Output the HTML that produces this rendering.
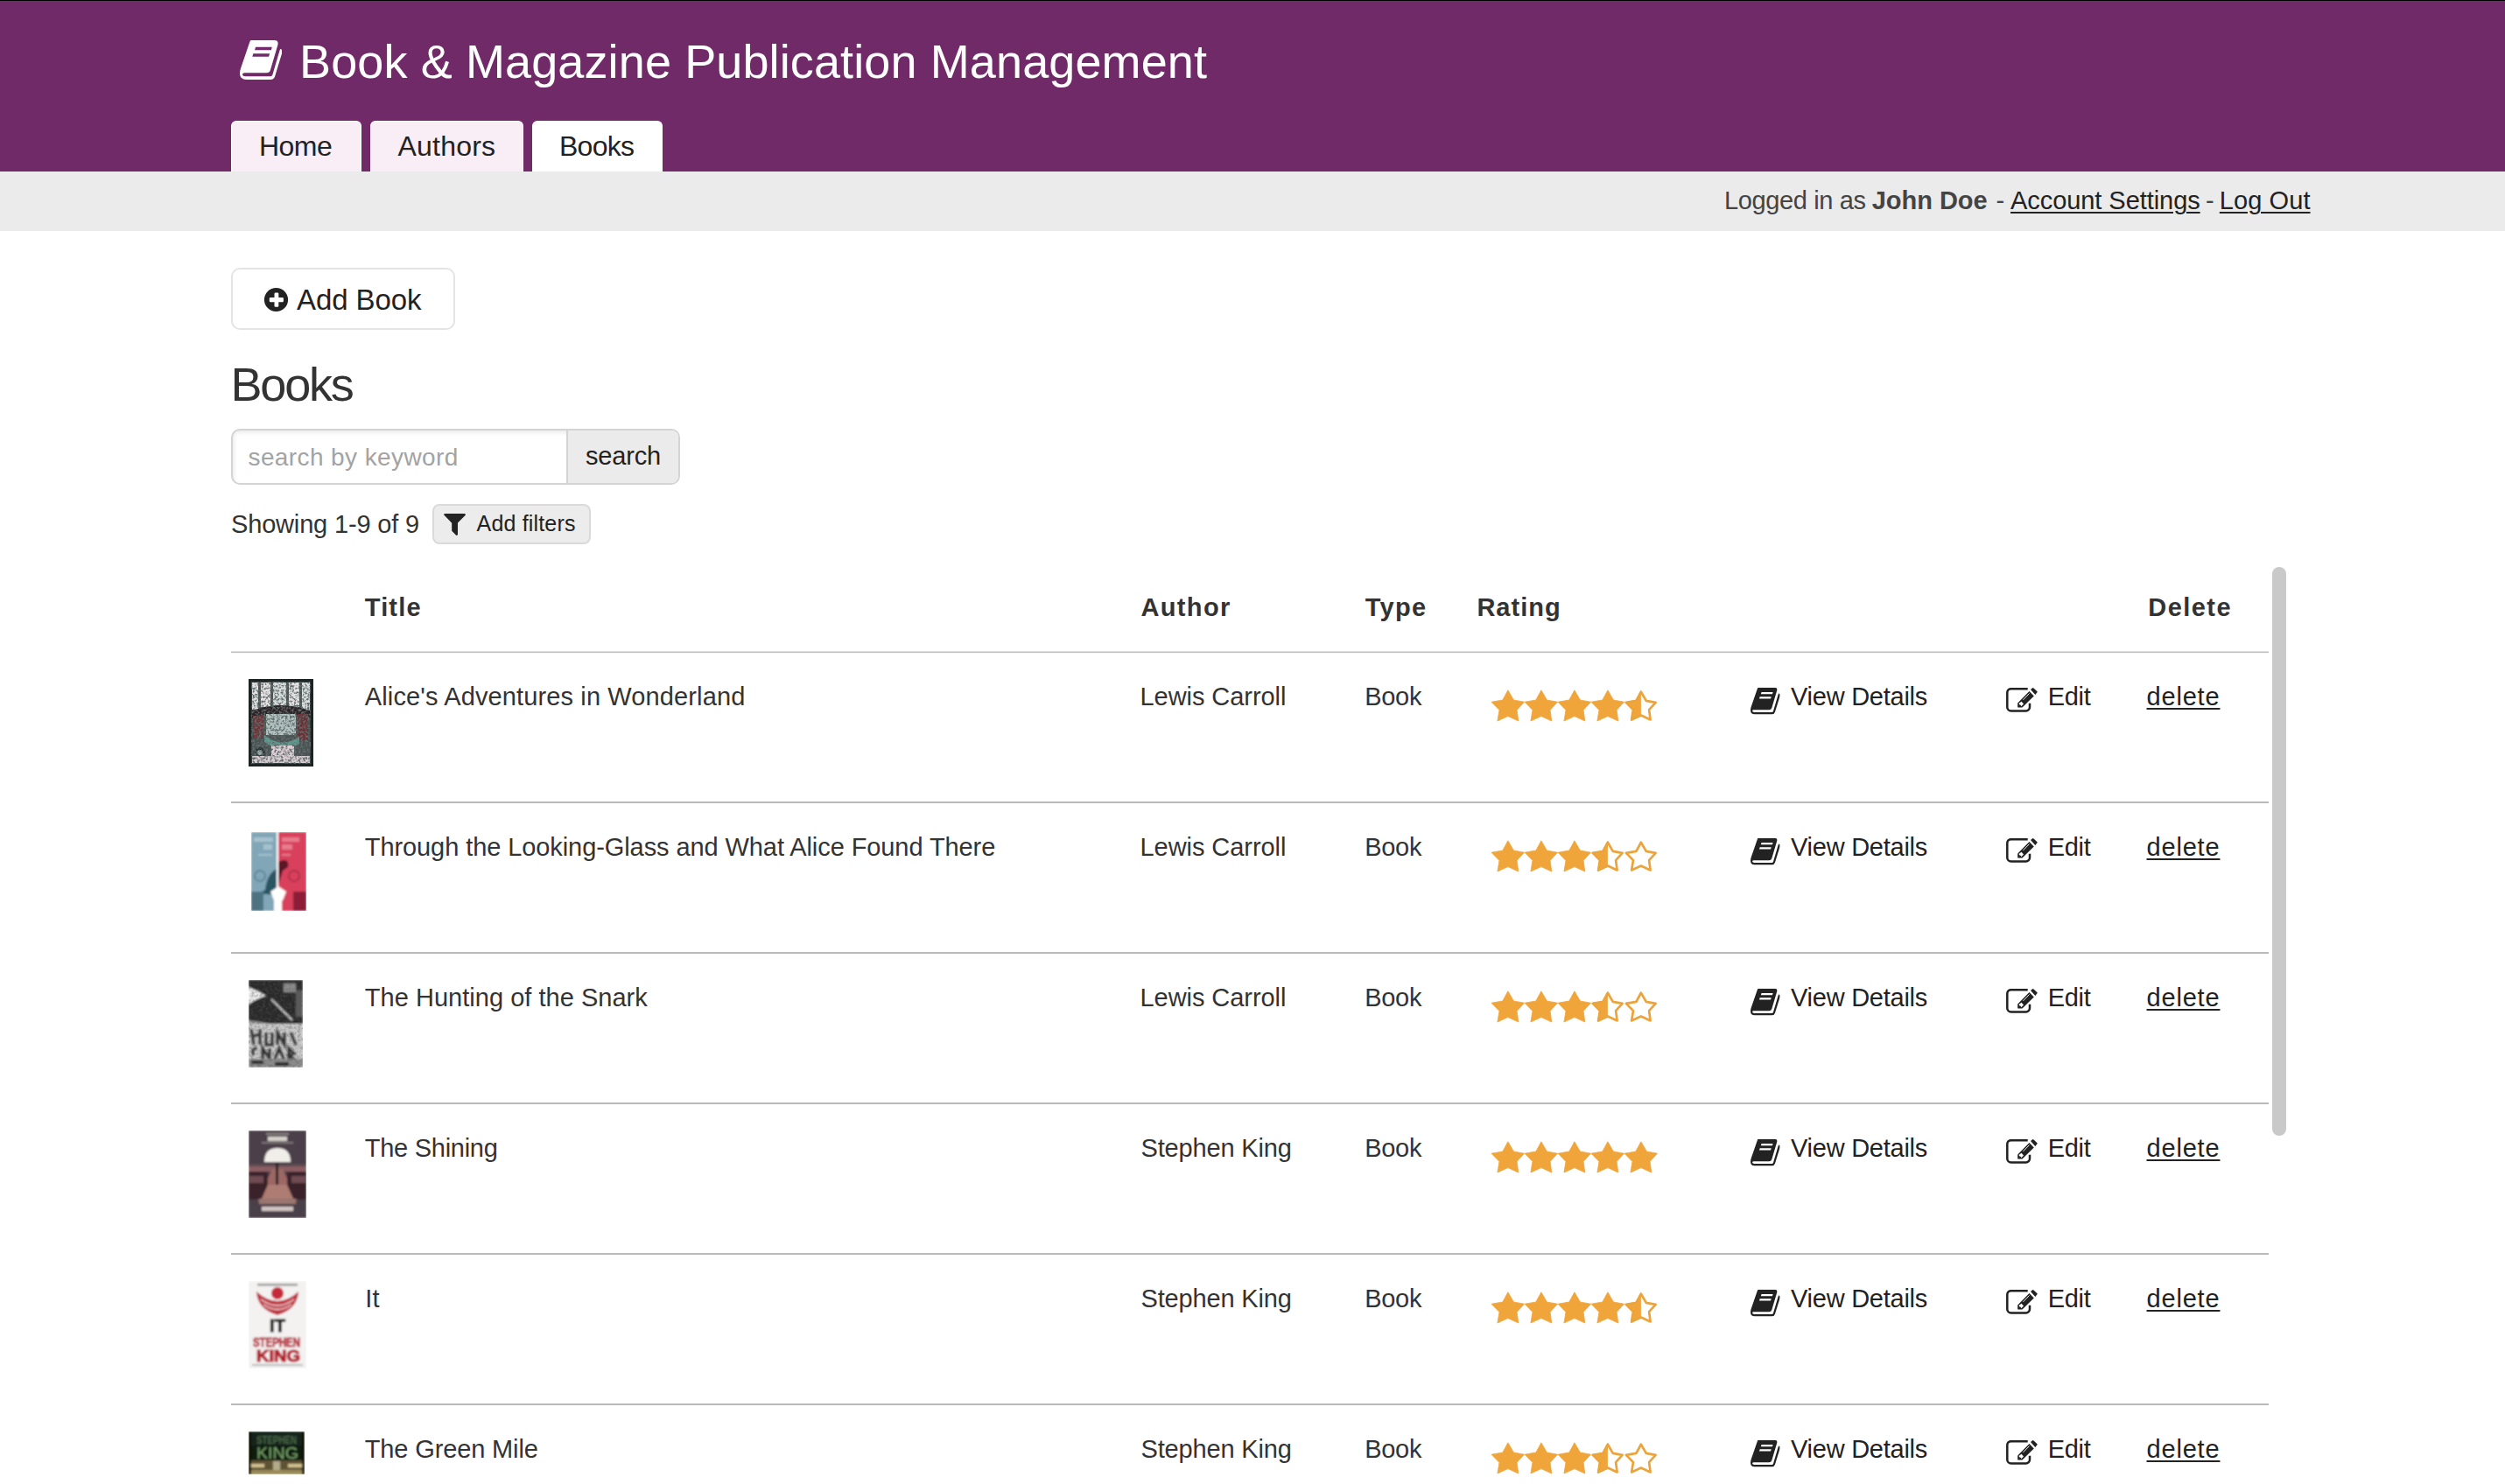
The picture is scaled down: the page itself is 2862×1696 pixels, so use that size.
<!DOCTYPE html>
<html><head><meta charset="utf-8"><title>Books</title>
<style>
html,body{margin:0;padding:0;background:#fff;}
body{width:2862px;height:1696px;overflow:hidden;position:relative;font-family:"Liberation Sans",sans-serif;}
.abs{position:absolute;}
.t{position:absolute;white-space:pre;font-family:"Liberation Sans",sans-serif;}
#hdr{position:absolute;left:0;top:0;width:2862px;height:196px;background:#702a68;border-top:1px solid #000;box-sizing:border-box;}
.tab{position:absolute;top:138px;height:58px;border-radius:6px 6px 0 0;box-sizing:border-box;border:1px solid #fff;border-bottom:none;background:#f9eef6;}
#bar{position:absolute;left:0;top:196px;width:2862px;height:68px;background:#ebebeb;}
#addbtn{position:absolute;left:264px;top:306px;width:256px;height:71px;box-sizing:border-box;border:2px solid #e4e4e4;border-radius:10px;background:#fff;}
#search{position:absolute;left:264px;top:490px;width:513px;height:64px;box-sizing:border-box;border:2px solid #d4d4d4;border-radius:10px;overflow:hidden;background:#fff;}
#search .inp{position:absolute;left:0;top:0;width:381px;height:60px;box-shadow:inset 2px 3px 4px rgba(0,0,0,0.075);}
#search .btn{position:absolute;left:381px;top:0;width:130px;height:60px;background:#ebebeb;border-left:2px solid #d4d4d4;box-sizing:border-box;}
#filt{position:absolute;left:494px;top:576px;width:181px;height:46px;box-sizing:border-box;border:2px solid #dadada;border-radius:8px;background:#ececec;}
#scroll{position:absolute;left:2596px;top:648px;width:16px;height:650px;border-radius:8px;background:#c9c9c9;}
</style></head><body>
<svg width="0" height="0" style="position:absolute">
<defs><symbol id="book" viewBox="0 0 34 31" preserveAspectRatio="none">
<path d="M9 0 H27.6 Q31.3 0 30.6 3.4 L24.6 23.4 Q23.9 25.6 21.5 25.6 H3.8 Q2 25.6 2.1 27 Q2.3 28.4 4.3 28.4 H24.6 Q25.9 28.4 26.3 27.2 L32 8.2 Q32.4 6.7 33 6.9 Q34.6 7.6 34 9.9 L28.3 28.3 Q27.5 31 24.6 31 H5.4 Q0 31 0 26.2 Q0 24.3 0.7 22.3 L7.9 1.5 Q8.4 0 9 0 Z M12.7 5.3 H25.9 L25.2 7.7 H12 Z M10.8 10.5 H24 L23.3 13 H10.1 Z" fill-rule="evenodd"/>
</symbol><symbol id="edit" viewBox="0 0 36 28">
<path d="M24.7 1.2 H5.6 A4.3 4.3 0 0 0 1.3 5.5 V22.2 A4.3 4.3 0 0 0 5.6 26.5 H22.7 A4.3 4.3 0 0 0 27 22.2 V17.8" fill="none" stroke="#222" stroke-width="2.5"/>
<path d="M13.2 17.5 L26.5 3.9 L31.8 9.5 L18.5 22.5 L13.2 22.5 Z" fill="#222"/>
<path d="M19.4 13.9 L26.5 6.5" stroke="#fff" stroke-width="0.9"/>
<path d="M14.65 17.8 L17.6 15.7 L20 18.4 L17.3 21.2 L16.7 19.7 L15.5 19.6 L14.8 18.8 Z" fill="#fff"/>
<path d="M28 2.1 L30.2 0.2 Q30.7 -0.1 31.2 0.3 L35.5 4.2 Q35.9 4.7 35.5 5.2 L33.3 8 Z" fill="#222"/>
</symbol></defs></svg>
<div id="hdr"></div>
<svg style="position:absolute;left:274px;top:45.8px" width="48.3" height="45" viewBox="0 0 48.3 45"><use href="#book" fill="#fff" x="0" y="0" width="48.3" height="45"/></svg>
<div class="tab" style="left:264px;width:149px;"></div>
<div class="tab" style="left:423px;width:175px;"></div>
<div class="tab" style="left:608px;width:149px;background:#fff;"></div>
<div id="bar"></div>
<div id="addbtn"></div>
<svg class="abs" style="left:300px;top:327px" width="32" height="32" viewBox="0 0 32 32">
<circle cx="15.5" cy="15.5" r="13.6" fill="#222"/>
<rect x="7.8" y="13" width="16.1" height="5.3" rx="1.2" fill="#fff"/>
<rect x="13.5" y="7.5" width="4.8" height="16.3" rx="1.2" fill="#fff"/>
</svg>
<div id="search"><div class="inp"></div><div class="btn"></div></div>
<div id="filt"></div>
<svg class="abs" style="left:0;top:0" width="2862" height="1696" viewBox="0 0 2862 1696">
<path d="M507 588.2 Q507.3 587.1 508.8 587.1 H530.3 Q531.8 587.1 532 588.4 L523 597.4 V610.8 Q522.6 612.2 521.4 611.9 L516.2 606.7 V597.8 Z" fill="#222"/>
<rect x="264" y="744.5" width="2328" height="1.6" fill="#bdbdbd"/>
<rect x="264" y="916.0" width="2328" height="2" fill="#bababa"/>
<rect x="264" y="1088.0" width="2328" height="2" fill="#bababa"/>
<rect x="264" y="1260.0" width="2328" height="2" fill="#bababa"/>
<rect x="264" y="1432.0" width="2328" height="2" fill="#bababa"/>
<rect x="264" y="1604.0" width="2328" height="2" fill="#bababa"/>
<polygon points="1722.90,788.80 1729.40,800.00 1741.50,802.20 1733.10,811.50 1734.80,824.00 1722.90,818.60 1710.90,824.00 1713.00,811.50 1704.00,802.20 1716.80,800.00" fill="#f0a53b" stroke="#f0a53b" stroke-width="0.8" stroke-linejoin="round"/>
<polygon points="1760.90,788.80 1767.40,800.00 1779.50,802.20 1771.10,811.50 1772.80,824.00 1760.90,818.60 1748.90,824.00 1751.00,811.50 1742.00,802.20 1754.80,800.00" fill="#f0a53b" stroke="#f0a53b" stroke-width="0.8" stroke-linejoin="round"/>
<polygon points="1798.90,788.80 1805.40,800.00 1817.50,802.20 1809.10,811.50 1810.80,824.00 1798.90,818.60 1786.90,824.00 1789.00,811.50 1780.00,802.20 1792.80,800.00" fill="#f0a53b" stroke="#f0a53b" stroke-width="0.8" stroke-linejoin="round"/>
<polygon points="1836.90,788.80 1843.40,800.00 1855.50,802.20 1847.10,811.50 1848.80,824.00 1836.90,818.60 1824.90,824.00 1827.00,811.50 1818.00,802.20 1830.80,800.00" fill="#f0a53b" stroke="#f0a53b" stroke-width="0.8" stroke-linejoin="round"/>
<clipPath id="c04"><rect x="1856.0" y="786.8" width="18.9" height="40"/></clipPath>
<polygon points="1874.90,788.80 1881.40,800.00 1893.50,802.20 1885.10,811.50 1886.80,824.00 1874.90,818.60 1862.90,824.00 1865.00,811.50 1856.00,802.20 1868.80,800.00" fill="#f0a53b" clip-path="url(#c04)"/>
<polygon points="18.90,0.00 25.40,11.20 37.50,13.40 29.10,22.70 30.80,35.20 18.90,29.80 6.90,35.20 9.00,22.70 0.00,13.40 12.80,11.20" fill="none" stroke="#eba43c" stroke-width="3" stroke-linejoin="round" transform="translate(1874.90 808.30) scale(0.9) translate(-18.90 -19.50)"/>
<polygon points="1722.90,960.80 1729.40,972.00 1741.50,974.20 1733.10,983.50 1734.80,996.00 1722.90,990.60 1710.90,996.00 1713.00,983.50 1704.00,974.20 1716.80,972.00" fill="#f0a53b" stroke="#f0a53b" stroke-width="0.8" stroke-linejoin="round"/>
<polygon points="1760.90,960.80 1767.40,972.00 1779.50,974.20 1771.10,983.50 1772.80,996.00 1760.90,990.60 1748.90,996.00 1751.00,983.50 1742.00,974.20 1754.80,972.00" fill="#f0a53b" stroke="#f0a53b" stroke-width="0.8" stroke-linejoin="round"/>
<polygon points="1798.90,960.80 1805.40,972.00 1817.50,974.20 1809.10,983.50 1810.80,996.00 1798.90,990.60 1786.90,996.00 1789.00,983.50 1780.00,974.20 1792.80,972.00" fill="#f0a53b" stroke="#f0a53b" stroke-width="0.8" stroke-linejoin="round"/>
<clipPath id="c13"><rect x="1818.0" y="958.8" width="18.9" height="40"/></clipPath>
<polygon points="1836.90,960.80 1843.40,972.00 1855.50,974.20 1847.10,983.50 1848.80,996.00 1836.90,990.60 1824.90,996.00 1827.00,983.50 1818.00,974.20 1830.80,972.00" fill="#f0a53b" clip-path="url(#c13)"/>
<polygon points="18.90,0.00 25.40,11.20 37.50,13.40 29.10,22.70 30.80,35.20 18.90,29.80 6.90,35.20 9.00,22.70 0.00,13.40 12.80,11.20" fill="none" stroke="#eba43c" stroke-width="3" stroke-linejoin="round" transform="translate(1836.90 980.30) scale(0.9) translate(-18.90 -19.50)"/>
<polygon points="18.90,0.00 25.40,11.20 37.50,13.40 29.10,22.70 30.80,35.20 18.90,29.80 6.90,35.20 9.00,22.70 0.00,13.40 12.80,11.20" fill="none" stroke="#eba43c" stroke-width="3" stroke-linejoin="round" transform="translate(1874.90 980.30) scale(0.9) translate(-18.90 -19.50)"/>
<polygon points="1722.90,1132.80 1729.40,1144.00 1741.50,1146.20 1733.10,1155.50 1734.80,1168.00 1722.90,1162.60 1710.90,1168.00 1713.00,1155.50 1704.00,1146.20 1716.80,1144.00" fill="#f0a53b" stroke="#f0a53b" stroke-width="0.8" stroke-linejoin="round"/>
<polygon points="1760.90,1132.80 1767.40,1144.00 1779.50,1146.20 1771.10,1155.50 1772.80,1168.00 1760.90,1162.60 1748.90,1168.00 1751.00,1155.50 1742.00,1146.20 1754.80,1144.00" fill="#f0a53b" stroke="#f0a53b" stroke-width="0.8" stroke-linejoin="round"/>
<polygon points="1798.90,1132.80 1805.40,1144.00 1817.50,1146.20 1809.10,1155.50 1810.80,1168.00 1798.90,1162.60 1786.90,1168.00 1789.00,1155.50 1780.00,1146.20 1792.80,1144.00" fill="#f0a53b" stroke="#f0a53b" stroke-width="0.8" stroke-linejoin="round"/>
<clipPath id="c23"><rect x="1818.0" y="1130.8" width="18.9" height="40"/></clipPath>
<polygon points="1836.90,1132.80 1843.40,1144.00 1855.50,1146.20 1847.10,1155.50 1848.80,1168.00 1836.90,1162.60 1824.90,1168.00 1827.00,1155.50 1818.00,1146.20 1830.80,1144.00" fill="#f0a53b" clip-path="url(#c23)"/>
<polygon points="18.90,0.00 25.40,11.20 37.50,13.40 29.10,22.70 30.80,35.20 18.90,29.80 6.90,35.20 9.00,22.70 0.00,13.40 12.80,11.20" fill="none" stroke="#eba43c" stroke-width="3" stroke-linejoin="round" transform="translate(1836.90 1152.30) scale(0.9) translate(-18.90 -19.50)"/>
<polygon points="18.90,0.00 25.40,11.20 37.50,13.40 29.10,22.70 30.80,35.20 18.90,29.80 6.90,35.20 9.00,22.70 0.00,13.40 12.80,11.20" fill="none" stroke="#eba43c" stroke-width="3" stroke-linejoin="round" transform="translate(1874.90 1152.30) scale(0.9) translate(-18.90 -19.50)"/>
<polygon points="1722.90,1304.80 1729.40,1316.00 1741.50,1318.20 1733.10,1327.50 1734.80,1340.00 1722.90,1334.60 1710.90,1340.00 1713.00,1327.50 1704.00,1318.20 1716.80,1316.00" fill="#f0a53b" stroke="#f0a53b" stroke-width="0.8" stroke-linejoin="round"/>
<polygon points="1760.90,1304.80 1767.40,1316.00 1779.50,1318.20 1771.10,1327.50 1772.80,1340.00 1760.90,1334.60 1748.90,1340.00 1751.00,1327.50 1742.00,1318.20 1754.80,1316.00" fill="#f0a53b" stroke="#f0a53b" stroke-width="0.8" stroke-linejoin="round"/>
<polygon points="1798.90,1304.80 1805.40,1316.00 1817.50,1318.20 1809.10,1327.50 1810.80,1340.00 1798.90,1334.60 1786.90,1340.00 1789.00,1327.50 1780.00,1318.20 1792.80,1316.00" fill="#f0a53b" stroke="#f0a53b" stroke-width="0.8" stroke-linejoin="round"/>
<polygon points="1836.90,1304.80 1843.40,1316.00 1855.50,1318.20 1847.10,1327.50 1848.80,1340.00 1836.90,1334.60 1824.90,1340.00 1827.00,1327.50 1818.00,1318.20 1830.80,1316.00" fill="#f0a53b" stroke="#f0a53b" stroke-width="0.8" stroke-linejoin="round"/>
<polygon points="1874.90,1304.80 1881.40,1316.00 1893.50,1318.20 1885.10,1327.50 1886.80,1340.00 1874.90,1334.60 1862.90,1340.00 1865.00,1327.50 1856.00,1318.20 1868.80,1316.00" fill="#f0a53b" stroke="#f0a53b" stroke-width="0.8" stroke-linejoin="round"/>
<polygon points="1722.90,1476.80 1729.40,1488.00 1741.50,1490.20 1733.10,1499.50 1734.80,1512.00 1722.90,1506.60 1710.90,1512.00 1713.00,1499.50 1704.00,1490.20 1716.80,1488.00" fill="#f0a53b" stroke="#f0a53b" stroke-width="0.8" stroke-linejoin="round"/>
<polygon points="1760.90,1476.80 1767.40,1488.00 1779.50,1490.20 1771.10,1499.50 1772.80,1512.00 1760.90,1506.60 1748.90,1512.00 1751.00,1499.50 1742.00,1490.20 1754.80,1488.00" fill="#f0a53b" stroke="#f0a53b" stroke-width="0.8" stroke-linejoin="round"/>
<polygon points="1798.90,1476.80 1805.40,1488.00 1817.50,1490.20 1809.10,1499.50 1810.80,1512.00 1798.90,1506.60 1786.90,1512.00 1789.00,1499.50 1780.00,1490.20 1792.80,1488.00" fill="#f0a53b" stroke="#f0a53b" stroke-width="0.8" stroke-linejoin="round"/>
<polygon points="1836.90,1476.80 1843.40,1488.00 1855.50,1490.20 1847.10,1499.50 1848.80,1512.00 1836.90,1506.60 1824.90,1512.00 1827.00,1499.50 1818.00,1490.20 1830.80,1488.00" fill="#f0a53b" stroke="#f0a53b" stroke-width="0.8" stroke-linejoin="round"/>
<clipPath id="c44"><rect x="1856.0" y="1474.8" width="18.9" height="40"/></clipPath>
<polygon points="1874.90,1476.80 1881.40,1488.00 1893.50,1490.20 1885.10,1499.50 1886.80,1512.00 1874.90,1506.60 1862.90,1512.00 1865.00,1499.50 1856.00,1490.20 1868.80,1488.00" fill="#f0a53b" clip-path="url(#c44)"/>
<polygon points="18.90,0.00 25.40,11.20 37.50,13.40 29.10,22.70 30.80,35.20 18.90,29.80 6.90,35.20 9.00,22.70 0.00,13.40 12.80,11.20" fill="none" stroke="#eba43c" stroke-width="3" stroke-linejoin="round" transform="translate(1874.90 1496.30) scale(0.9) translate(-18.90 -19.50)"/>
<polygon points="1722.90,1648.80 1729.40,1660.00 1741.50,1662.20 1733.10,1671.50 1734.80,1684.00 1722.90,1678.60 1710.90,1684.00 1713.00,1671.50 1704.00,1662.20 1716.80,1660.00" fill="#f0a53b" stroke="#f0a53b" stroke-width="0.8" stroke-linejoin="round"/>
<polygon points="1760.90,1648.80 1767.40,1660.00 1779.50,1662.20 1771.10,1671.50 1772.80,1684.00 1760.90,1678.60 1748.90,1684.00 1751.00,1671.50 1742.00,1662.20 1754.80,1660.00" fill="#f0a53b" stroke="#f0a53b" stroke-width="0.8" stroke-linejoin="round"/>
<polygon points="1798.90,1648.80 1805.40,1660.00 1817.50,1662.20 1809.10,1671.50 1810.80,1684.00 1798.90,1678.60 1786.90,1684.00 1789.00,1671.50 1780.00,1662.20 1792.80,1660.00" fill="#f0a53b" stroke="#f0a53b" stroke-width="0.8" stroke-linejoin="round"/>
<clipPath id="c53"><rect x="1818.0" y="1646.8" width="18.9" height="40"/></clipPath>
<polygon points="1836.90,1648.80 1843.40,1660.00 1855.50,1662.20 1847.10,1671.50 1848.80,1684.00 1836.90,1678.60 1824.90,1684.00 1827.00,1671.50 1818.00,1662.20 1830.80,1660.00" fill="#f0a53b" clip-path="url(#c53)"/>
<polygon points="18.90,0.00 25.40,11.20 37.50,13.40 29.10,22.70 30.80,35.20 18.90,29.80 6.90,35.20 9.00,22.70 0.00,13.40 12.80,11.20" fill="none" stroke="#eba43c" stroke-width="3" stroke-linejoin="round" transform="translate(1836.90 1668.30) scale(0.9) translate(-18.90 -19.50)"/>
<polygon points="18.90,0.00 25.40,11.20 37.50,13.40 29.10,22.70 30.80,35.20 18.90,29.80 6.90,35.20 9.00,22.70 0.00,13.40 12.80,11.20" fill="none" stroke="#eba43c" stroke-width="3" stroke-linejoin="round" transform="translate(1874.90 1668.30) scale(0.9) translate(-18.90 -19.50)"/>
<use href="#book" x="2000" y="785.7" width="33.6" height="30.8" fill="#222"/>
<use href="#edit" x="2292" y="786" width="36" height="28" />
<use href="#book" x="2000" y="957.7" width="33.6" height="30.8" fill="#222"/>
<use href="#edit" x="2292" y="958" width="36" height="28" />
<use href="#book" x="2000" y="1129.7" width="33.6" height="30.8" fill="#222"/>
<use href="#edit" x="2292" y="1130" width="36" height="28" />
<use href="#book" x="2000" y="1301.7" width="33.6" height="30.8" fill="#222"/>
<use href="#edit" x="2292" y="1302" width="36" height="28" />
<use href="#book" x="2000" y="1473.7" width="33.6" height="30.8" fill="#222"/>
<use href="#edit" x="2292" y="1474" width="36" height="28" />
<use href="#book" x="2000" y="1645.7" width="33.6" height="30.8" fill="#222"/>
<use href="#edit" x="2292" y="1646" width="36" height="28" />
</svg>

<svg width="0" height="0" style="position:absolute"><defs>
<filter id="nz1" x="0" y="0" width="100%" height="100%"><feTurbulence type="fractalNoise" baseFrequency="0.4" numOctaves="2" seed="7"/><feColorMatrix type="matrix" values="0 0 0 0 0.12  0 0 0 0 0.15  0 0 0 0 0.15  0 0 0 -3.6 2.05"/><feGaussianBlur stdDeviation="0.35"/></filter>
<filter id="nz2" x="0" y="0" width="100%" height="100%"><feTurbulence type="fractalNoise" baseFrequency="0.3" numOctaves="2" seed="11"/><feColorMatrix type="matrix" values="0 0 0 0 0.1  0 0 0 0 0.1  0 0 0 0 0.1  0 0 0 -3 1.75"/><feGaussianBlur stdDeviation="0.6"/></filter>
<filter id="bl" x="-5%" y="-5%" width="110%" height="110%"><feGaussianBlur stdDeviation="0.9"/></filter>
<filter id="bl2" x="-5%" y="-5%" width="110%" height="110%"><feGaussianBlur stdDeviation="1"/></filter>
</defs></svg>
<svg class="abs" style="left:284px;top:776px" width="74" height="100" viewBox="0 0 74 100">
<rect width="74" height="100" fill="#1c2424"/>
<rect x="3.5" y="3.5" width="67" height="93" fill="#4a5252"/>
<rect x="4" y="4" width="7" height="31" fill="#e2e2e2"/><rect x="14" y="4" width="11" height="28" fill="#e6e2e2"/><rect x="28" y="4" width="15" height="26" fill="#d5dcdb"/><rect x="46" y="4" width="12" height="28" fill="#e4e2e2"/><rect x="61" y="4" width="9" height="33" fill="#dde1e1"/>
<path d="M4 36 Q37 24 70 36 L70 44 Q37 34 4 46Z" fill="#2a2224"/>
<rect x="20" y="40" width="34" height="24" fill="#b3c4c1"/>
<rect x="5" y="42" width="12" height="26" fill="#6e3438"/><rect x="56" y="40" width="12" height="30" fill="#6a3236"/>
<path d="M18 64 Q37 80 58 66 L58 74 Q37 86 18 72Z" fill="#5f9a90"/>
<circle cx="13" cy="84" r="6" fill="#2a3434"/><circle cx="13" cy="84" r="3" fill="#9aa"/>
<rect x="4" y="88" width="66" height="8" fill="#d8ccd0"/>
<rect x="26" y="76" width="26" height="12" fill="#dfd0d6"/>
<rect x="3.5" y="3.5" width="67" height="93" filter="url(#nz1)"/>
</svg>
<svg class="abs" style="left:287px;top:951px" width="63" height="90" viewBox="0 0 63 90">
<g filter="url(#bl)">
<rect x="0" y="0" width="29" height="90" fill="#80a6b7"/>
<rect x="31" y="0" width="32" height="90" fill="#d8405c"/>
<rect x="3" y="6" width="22" height="5" fill="#a6c2ce"/><rect x="14" y="14" width="10" height="6" fill="#a6c2ce"/><rect x="8" y="25" width="16" height="2" fill="#a6c2ce"/>
<rect x="35" y="6" width="20" height="5" fill="#e77b8d"/><rect x="35" y="14" width="12" height="6" fill="#e77b8d"/><rect x="35" y="25" width="10" height="2" fill="#e77b8d"/>
<circle cx="10" cy="50" r="6" fill="none" stroke="#577f8f" stroke-width="1.6"/><circle cx="49" cy="50" r="6" fill="none" stroke="#a82a44" stroke-width="1.6"/>
<path d="M29 42 Q18 48 16 66 L8 70 L29 72Z" fill="#2c5563"/>
<path d="M31 34 Q44 28 42 40 L36 44 L31 60Z" fill="#5c1527"/>
<rect x="0" y="68" width="14" height="22" fill="#4d7382"/><rect x="48" y="68" width="15" height="22" fill="#8c1e38"/>
<path d="M22 68 L31 62 L40 68 L36 78 L26 78Z" fill="#fff"/>
<rect x="26" y="76" width="9" height="14" fill="#fff"/>
<rect x="29" y="0" width="2" height="90" fill="#fff"/>
</g>
</svg>
<svg class="abs" style="left:284px;top:1120px" width="62" height="100" viewBox="0 0 62 100">
<g filter="url(#bl)">
<rect width="62" height="100" fill="#9a9a9a"/>
<path d="M0 0 H62 V58 Q30 50 0 46Z" fill="#2a2a2a"/>
<path d="M0 8 Q10 12 20 18 Q8 22 0 28Z" fill="#ebebeb"/>
<path d="M26 22 L50 46" stroke="#d0d0d0" stroke-width="2"/>
<rect x="40" y="4" width="14" height="10" fill="#8a8a8a"/><rect x="54" y="12" width="8" height="30" fill="#5a5a5a"/>
<rect x="0" y="50" width="62" height="44" fill="#c8c8c8"/>
<path d="M3 56 L6 74 M6 64 L13 62 M13 56 L13 74 M20 60 L20 74 L27 74 L27 60 M33 74 L33 60 L41 74 L41 60 M48 60 L54 74" stroke="#303030" stroke-width="3.6" fill="none"/>
<path d="M6 86 Q2 78 10 78 M16 90 L16 78 L24 90 L24 78 M30 90 L35 78 L40 90 M46 90 L46 78 L52 84 L46 86 L54 92" stroke="#303030" stroke-width="3.6" fill="none"/>
<rect x="0" y="90" width="62" height="10" fill="#8a8a8a"/>
<rect x="3" y="92" width="14" height="4" fill="#222"/><rect x="30" y="94" width="16" height="4" fill="#222"/>
</g>
<rect width="62" height="100" filter="url(#nz2)" opacity="0.35"/>
</svg>
<svg class="abs" style="left:284px;top:1292px" width="66" height="100" viewBox="0 0 66 100">
<g filter="url(#bl)">
<rect width="66" height="100" fill="#4b4049"/>
<rect x="20" y="3" width="26" height="2" fill="#8d8688"/><rect x="22" y="7" width="22" height="5" fill="#d6cfcb"/><rect x="15" y="13" width="36" height="2" fill="#7d7678"/>
<path d="M18 36 Q18 20 33 20 Q48 20 48 36Z" fill="#f1eeea"/>
<rect x="0" y="38" width="66" height="4" fill="#5a4a50"/>
<rect x="0" y="41" width="66" height="6" fill="#8a5d63"/>
<path d="M27 44 L39 44 L56 80 L10 80Z" fill="#9c6763"/>
<rect x="0" y="47" width="22" height="32" fill="#3a2329"/><rect x="44" y="47" width="22" height="32" fill="#3a2329"/>
<rect x="1" y="52" width="16" height="8" fill="#6f4c52"/><rect x="49" y="52" width="16" height="8" fill="#6f4c52"/>
<path d="M22 62 L44 62 L52 80 L14 80Z" fill="#ad7b72"/>
<rect x="12" y="78" width="42" height="6" fill="#9a766f"/>
<rect x="0" y="84" width="66" height="16" fill="#48404a"/>
<rect x="15" y="87" width="36" height="5" fill="#cfc3c3"/>
<rect x="31" y="36" width="3" height="26" fill="#2a2026"/>
</g>
</svg>
<svg class="abs" style="left:284px;top:1464px" width="66" height="100" viewBox="0 0 66 100">
<g filter="url(#bl)">
<rect width="66" height="100" fill="#f3f2f1"/>
<rect x="10" y="3" width="46" height="2.5" fill="#9a9a9a"/>
<circle cx="33" cy="14" r="7" fill="#c42c3a"/>
<path d="M9 12 Q33 34 57 12 Q56 32 33 39 Q10 32 9 12Z" fill="#bf3643"/>
<path d="M14 21 Q33 35 52 21 M17 27 Q33 38 49 27" stroke="#f0d8d8" stroke-width="1.3" fill="none"/>
<text x="33" y="58" font-family="Liberation Sans" font-weight="bold" font-size="20" text-anchor="middle" fill="#1a1618" stroke="#1a1618" stroke-width="1">IT</text>
<text x="32" y="75" font-family="Liberation Sans" font-weight="bold" font-size="15" text-anchor="middle" fill="#b8303e" stroke="#b8303e" stroke-width="0.8" textLength="54" lengthAdjust="spacingAndGlyphs">STEPHEN</text>
<text x="34" y="92" font-family="Liberation Sans" font-weight="bold" font-size="18" text-anchor="middle" fill="#b5202f" stroke="#b5202f" stroke-width="1.2" textLength="50" lengthAdjust="spacingAndGlyphs">KING</text>
<rect x="4" y="95" width="58" height="2" fill="#b9b9b9"/>
</g>
</svg>
<svg class="abs" style="left:284px;top:1636px" width="64" height="49" viewBox="0 0 64 49">
<g filter="url(#bl)">
<rect width="64" height="49" fill="#1d2a14"/>
<rect x="0" y="0" width="64" height="17" fill="#15201a"/>
<text x="32" y="14" font-family="Liberation Sans" font-weight="bold" font-size="13" text-anchor="middle" fill="#4a6a48" textLength="46" lengthAdjust="spacingAndGlyphs">STEPHEN</text>
<rect x="0" y="16" width="64" height="17" fill="#0f1f0c"/>
<text x="33" y="31" font-family="Liberation Sans" font-size="18" text-anchor="middle" fill="#79a56c" textLength="48" lengthAdjust="spacingAndGlyphs">KING</text>
<rect x="0" y="33" width="64" height="16" fill="#5f5334"/>
<rect x="3" y="37" width="15" height="4" fill="#d0c08e"/><rect x="45" y="37" width="16" height="4" fill="#d0c08e"/>
<rect x="28" y="34" width="8" height="14" fill="#b3aa8a"/>
<rect x="0" y="44" width="64" height="5" fill="#9a8a58"/>
<rect x="0" y="0" width="3" height="49" fill="#0a0a06"/><rect x="61" y="0" width="3" height="49" fill="#0a0a06"/>
</g>
</svg>

<div id="scroll"></div>
<div class="t" style="left:342.00px;top:42.59px;font-size:54px;line-height:54px;font-weight:400;color:#fff;letter-spacing:0.119px;">Book &amp; Magazine Publication Management</div>
<div class="t" style="left:296.00px;top:150.91px;font-size:32px;line-height:32px;font-weight:400;color:#222;letter-spacing:-0.521px;">Home</div>
<div class="t" style="left:454.60px;top:150.91px;font-size:32px;line-height:32px;font-weight:400;color:#222;letter-spacing:0.186px;">Authors</div>
<div class="t" style="left:639.00px;top:150.91px;font-size:32px;line-height:32px;font-weight:400;color:#222;letter-spacing:-0.734px;">Books</div>
<div class="t" style="left:1970.00px;top:215.45px;font-size:29px;line-height:29px;font-weight:400;color:#444;letter-spacing:-0.380px;">Logged in as</div>
<div class="t" style="left:2138.70px;top:215.45px;font-size:29px;line-height:29px;font-weight:700;color:#444;letter-spacing:-0.027px;">John Doe</div>
<div class="t" style="left:2280.60px;top:215.45px;font-size:29px;line-height:29px;font-weight:400;color:#444;letter-spacing:0.000px;">-</div>
<div class="t" style="left:2297.00px;top:215.45px;font-size:29px;line-height:29px;font-weight:400;color:#222;letter-spacing:-0.062px;text-decoration:underline;text-underline-offset:3px;text-decoration-thickness:2px;">Account Settings</div>
<div class="t" style="left:2520.00px;top:215.45px;font-size:29px;line-height:29px;font-weight:400;color:#444;letter-spacing:0.000px;">-</div>
<div class="t" style="left:2535.80px;top:215.45px;font-size:29px;line-height:29px;font-weight:400;color:#222;letter-spacing:0.079px;text-decoration:underline;text-underline-offset:3px;text-decoration-thickness:2px;">Log Out</div>
<div class="t" style="left:339.00px;top:325.87px;font-size:33px;line-height:33px;font-weight:400;color:#222;letter-spacing:-0.086px;">Add Book</div>
<div class="t" style="left:263.60px;top:412.49px;font-size:54px;line-height:54px;font-weight:400;color:#333;letter-spacing:-2.246px;">Books</div>
<div class="t" style="left:283.50px;top:509.30px;font-size:28px;line-height:28px;font-weight:400;color:#a3a3a3;letter-spacing:0.396px;">search by keyword</div>
<div class="t" style="left:669.00px;top:507.15px;font-size:29px;line-height:29px;font-weight:400;color:#222;letter-spacing:-0.183px;">search</div>
<div class="t" style="left:264.00px;top:585.05px;font-size:29px;line-height:29px;font-weight:400;color:#333;letter-spacing:-0.168px;">Showing 1-9 of 9</div>
<div class="t" style="left:544.60px;top:585.84px;font-size:25px;line-height:25px;font-weight:400;color:#222;letter-spacing:0.164px;">Add filters</div>
<div class="t" style="left:416.80px;top:679.75px;font-size:29px;line-height:29px;font-weight:700;color:#333;letter-spacing:1.160px;">Title</div>
<div class="t" style="left:1303.50px;top:679.75px;font-size:29px;line-height:29px;font-weight:700;color:#333;letter-spacing:1.351px;">Author</div>
<div class="t" style="left:1559.70px;top:679.75px;font-size:29px;line-height:29px;font-weight:700;color:#333;letter-spacing:1.298px;">Type</div>
<div class="t" style="left:1687.40px;top:679.75px;font-size:29px;line-height:29px;font-weight:700;color:#333;letter-spacing:1.020px;">Rating</div>
<div class="t" style="left:2454.30px;top:679.75px;font-size:29px;line-height:29px;font-weight:700;color:#333;letter-spacing:1.437px;">Delete</div>
<div class="t" style="left:416.80px;top:782.25px;font-size:29px;line-height:29px;font-weight:400;color:#333;letter-spacing:0.127px;">Alice&#x27;s Adventures in Wonderland</div>
<div class="t" style="left:1302.50px;top:782.25px;font-size:29px;line-height:29px;font-weight:400;color:#333;letter-spacing:-0.055px;">Lewis Carroll</div>
<div class="t" style="left:1559.20px;top:782.25px;font-size:29px;line-height:29px;font-weight:400;color:#333;letter-spacing:-0.267px;">Book</div>
<div class="t" style="left:2046.00px;top:782.25px;font-size:29px;line-height:29px;font-weight:400;color:#222;letter-spacing:-0.248px;">View Details</div>
<div class="t" style="left:2339.70px;top:782.25px;font-size:29px;line-height:29px;font-weight:400;color:#222;letter-spacing:-0.305px;">Edit</div>
<div class="t" style="left:2452.50px;top:782.25px;font-size:29px;line-height:29px;font-weight:400;color:#222;letter-spacing:0.823px;text-decoration:underline;text-underline-offset:3px;text-decoration-thickness:2px;">delete</div>
<div class="t" style="left:416.80px;top:954.25px;font-size:29px;line-height:29px;font-weight:400;color:#333;letter-spacing:-0.086px;">Through the Looking-Glass and What Alice Found There</div>
<div class="t" style="left:1302.50px;top:954.25px;font-size:29px;line-height:29px;font-weight:400;color:#333;letter-spacing:-0.055px;">Lewis Carroll</div>
<div class="t" style="left:1559.20px;top:954.25px;font-size:29px;line-height:29px;font-weight:400;color:#333;letter-spacing:-0.267px;">Book</div>
<div class="t" style="left:2046.00px;top:954.25px;font-size:29px;line-height:29px;font-weight:400;color:#222;letter-spacing:-0.248px;">View Details</div>
<div class="t" style="left:2339.70px;top:954.25px;font-size:29px;line-height:29px;font-weight:400;color:#222;letter-spacing:-0.305px;">Edit</div>
<div class="t" style="left:2452.50px;top:954.25px;font-size:29px;line-height:29px;font-weight:400;color:#222;letter-spacing:0.823px;text-decoration:underline;text-underline-offset:3px;text-decoration-thickness:2px;">delete</div>
<div class="t" style="left:416.80px;top:1126.25px;font-size:29px;line-height:29px;font-weight:400;color:#333;letter-spacing:0.026px;">The Hunting of the Snark</div>
<div class="t" style="left:1302.50px;top:1126.25px;font-size:29px;line-height:29px;font-weight:400;color:#333;letter-spacing:-0.055px;">Lewis Carroll</div>
<div class="t" style="left:1559.20px;top:1126.25px;font-size:29px;line-height:29px;font-weight:400;color:#333;letter-spacing:-0.267px;">Book</div>
<div class="t" style="left:2046.00px;top:1126.25px;font-size:29px;line-height:29px;font-weight:400;color:#222;letter-spacing:-0.248px;">View Details</div>
<div class="t" style="left:2339.70px;top:1126.25px;font-size:29px;line-height:29px;font-weight:400;color:#222;letter-spacing:-0.305px;">Edit</div>
<div class="t" style="left:2452.50px;top:1126.25px;font-size:29px;line-height:29px;font-weight:400;color:#222;letter-spacing:0.823px;text-decoration:underline;text-underline-offset:3px;text-decoration-thickness:2px;">delete</div>
<div class="t" style="left:416.80px;top:1298.25px;font-size:29px;line-height:29px;font-weight:400;color:#333;letter-spacing:-0.274px;">The Shining</div>
<div class="t" style="left:1303.50px;top:1298.25px;font-size:29px;line-height:29px;font-weight:400;color:#333;letter-spacing:-0.156px;">Stephen King</div>
<div class="t" style="left:1559.20px;top:1298.25px;font-size:29px;line-height:29px;font-weight:400;color:#333;letter-spacing:-0.267px;">Book</div>
<div class="t" style="left:2046.00px;top:1298.25px;font-size:29px;line-height:29px;font-weight:400;color:#222;letter-spacing:-0.248px;">View Details</div>
<div class="t" style="left:2339.70px;top:1298.25px;font-size:29px;line-height:29px;font-weight:400;color:#222;letter-spacing:-0.305px;">Edit</div>
<div class="t" style="left:2452.50px;top:1298.25px;font-size:29px;line-height:29px;font-weight:400;color:#222;letter-spacing:0.823px;text-decoration:underline;text-underline-offset:3px;text-decoration-thickness:2px;">delete</div>
<div class="t" style="left:417.20px;top:1470.25px;font-size:29px;line-height:29px;font-weight:400;color:#333;letter-spacing:0.243px;">It</div>
<div class="t" style="left:1303.50px;top:1470.25px;font-size:29px;line-height:29px;font-weight:400;color:#333;letter-spacing:-0.156px;">Stephen King</div>
<div class="t" style="left:1559.20px;top:1470.25px;font-size:29px;line-height:29px;font-weight:400;color:#333;letter-spacing:-0.267px;">Book</div>
<div class="t" style="left:2046.00px;top:1470.25px;font-size:29px;line-height:29px;font-weight:400;color:#222;letter-spacing:-0.248px;">View Details</div>
<div class="t" style="left:2339.70px;top:1470.25px;font-size:29px;line-height:29px;font-weight:400;color:#222;letter-spacing:-0.305px;">Edit</div>
<div class="t" style="left:2452.50px;top:1470.25px;font-size:29px;line-height:29px;font-weight:400;color:#222;letter-spacing:0.823px;text-decoration:underline;text-underline-offset:3px;text-decoration-thickness:2px;">delete</div>
<div class="t" style="left:416.80px;top:1642.25px;font-size:29px;line-height:29px;font-weight:400;color:#333;letter-spacing:-0.141px;">The Green Mile</div>
<div class="t" style="left:1303.50px;top:1642.25px;font-size:29px;line-height:29px;font-weight:400;color:#333;letter-spacing:-0.156px;">Stephen King</div>
<div class="t" style="left:1559.20px;top:1642.25px;font-size:29px;line-height:29px;font-weight:400;color:#333;letter-spacing:-0.267px;">Book</div>
<div class="t" style="left:2046.00px;top:1642.25px;font-size:29px;line-height:29px;font-weight:400;color:#222;letter-spacing:-0.248px;">View Details</div>
<div class="t" style="left:2339.70px;top:1642.25px;font-size:29px;line-height:29px;font-weight:400;color:#222;letter-spacing:-0.305px;">Edit</div>
<div class="t" style="left:2452.50px;top:1642.25px;font-size:29px;line-height:29px;font-weight:400;color:#222;letter-spacing:0.823px;text-decoration:underline;text-underline-offset:3px;text-decoration-thickness:2px;">delete</div>
<script>(function(){var w=window.innerWidth;if(w&&Math.abs(w-2862)>4){document.body.style.zoom=(w/2862);}})();</script>
</body></html>
